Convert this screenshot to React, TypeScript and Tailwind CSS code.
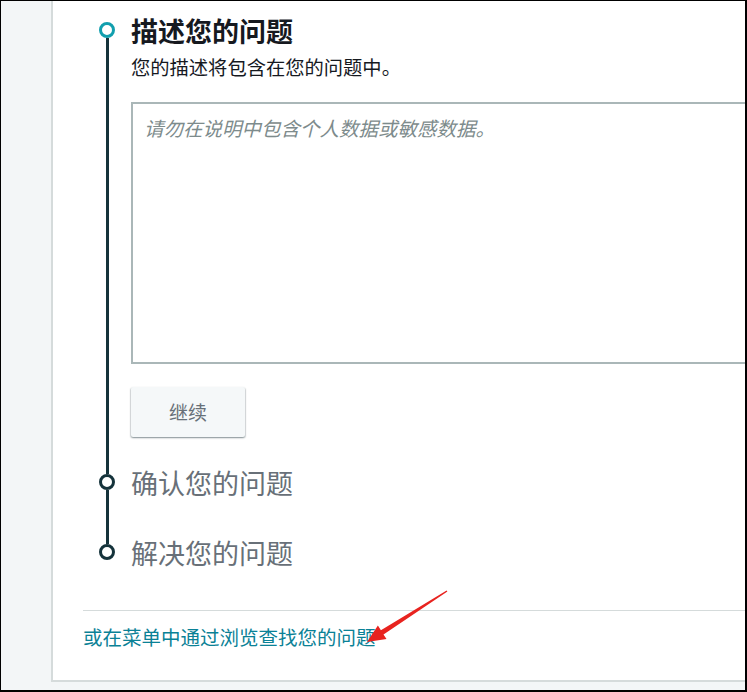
import type { ReactNode } from 'react'

interface StepProps {
  title: string
  active?: boolean
  first?: boolean
  last?: boolean
  children?: ReactNode
  bottomPad: string
}

function Step({ title, active, first, last, children, bottomPad }: StepProps) {
  return (
    <div className="flex">
      {/* timeline column */}
      <div className="flex w-4 shrink-0 flex-col items-center">
        <div className={`h-[9px] w-[3px] ${first ? 'bg-transparent' : 'bg-[#15333b]'}`} />
        <div
          className={`h-4 w-4 shrink-0 rounded-full border-[3px] bg-white ${
            active ? 'border-[#129fae]' : 'border-[#15333b]'
          }`}
        />
        <div className={`w-[3px] flex-1 ${last ? 'bg-transparent' : 'bg-[#15333b]'}`} />
      </div>
      <div className={`ml-4 min-w-0 flex-1 ${bottomPad}`}>
        <div
          className={`h-9 whitespace-nowrap text-[27px] leading-9 ${
            active ? 'font-bold text-[#16191f]' : 'text-[#687078]'
          }`}
        >
          {title}
        </div>
        {children}
      </div>
    </div>
  )
}

export default function App() {
  return (
    <div className="relative h-[692px] w-[747px] overflow-hidden bg-black pb-[2px] pl-[1px] pr-[2px] pt-[1px] font-['Noto_Sans_CJK_SC','Noto_Sans',sans-serif]">
      <div className="flex h-full bg-[#f3f6f7]">
        <div className="w-[50px] shrink-0" />
        <div className="mb-[8px] flex-1 overflow-hidden border-b-2 border-l-2 border-[#d5dbdb] bg-white pb-[29px] pl-[30px] pt-[12px]">
          <div className="pl-4">
            <Step title="描述您的问题" active first bottomPad="pb-[28px]">
              <p className="mt-[5px] whitespace-nowrap text-[19.3px] leading-[26px] text-[#16191f]">
                您的描述将包含在您的问题中。
              </p>
              <textarea
                className="mt-[22px] block h-[262px] w-[700px] resize-none border-2 border-[#aab7b8] bg-white pl-[11px] pr-3 pt-[11px] text-[19.5px] leading-[26px] text-[#16191f] outline-none placeholder:italic placeholder:text-[#7d8b8c]"
                placeholder="请勿在说明中包含个人数据或敏感数据。"
              />
              <button className="mt-[23px] flex h-[50px] w-[114px] items-center justify-center rounded-[2px] bg-[#f5f8f9] text-[19px] text-[#687078] shadow-[0_1px_2px_0_rgba(0,28,36,0.35),1px_1px_1px_0_rgba(0,28,36,0.1),-1px_1px_1px_0_rgba(0,28,36,0.1)]">
                继续
              </button>
            </Step>
            <Step title="确认您的问题" bottomPad="pb-[34px]" />
            <Step title="解决您的问题" last bottomPad="pb-0" />
          </div>
          <div className="mt-[39px] h-px bg-[#d5dbdb]" />
          <a
            href="#"
            className="mt-[12px] block whitespace-nowrap text-[19.5px] leading-[28px] text-[#0a8196]"
          >
            或在菜单中通过浏览查找您的问题
          </a>
        </div>
      </div>

      {/* red annotation arrow */}
      <svg
        className="pointer-events-none absolute left-0 top-0"
        width="747"
        height="692"
        viewBox="0 0 747 692"
      >
        <polygon
          points="446.6,590.4 447.4,591.6 383.5,634.4 386.5,639 367,642 377.9,625.6 380.9,630.2"
          fill="#e8231f"
        />
      </svg>
    </div>
  )
}
